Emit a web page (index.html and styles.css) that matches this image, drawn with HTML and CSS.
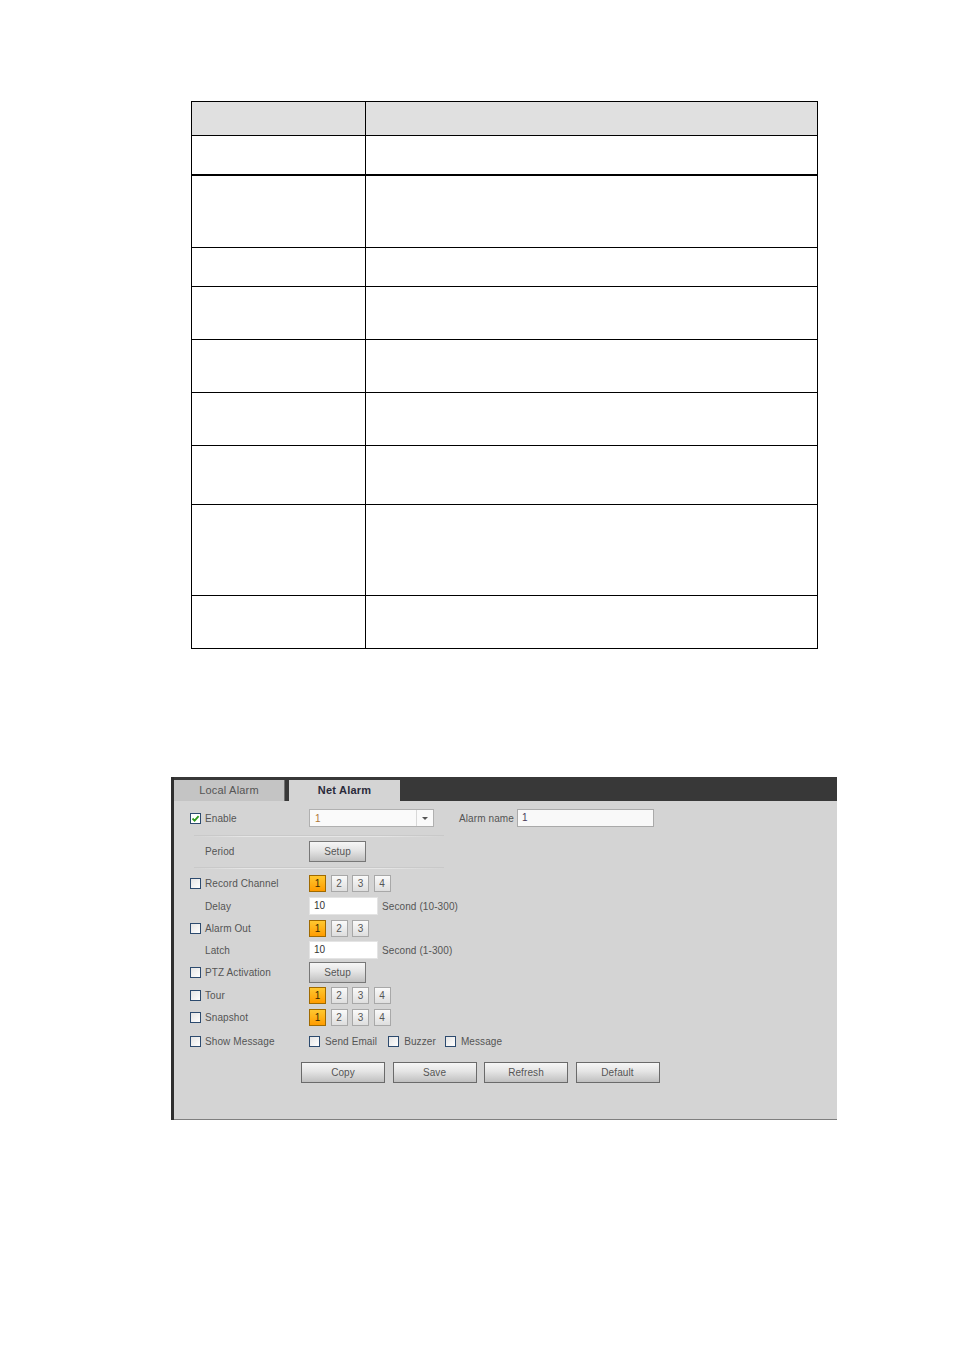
FILE: index.html
```
<!DOCTYPE html>
<html>
<head>
<meta charset="utf-8">
<link rel="stylesheet" href="styles.css">
</head>
<body>
<div class="doc-table">
  <div class="row head h33"><div class="c1"></div><div class="c2"></div></div>
  <div class="row h38"><div class="c1"></div><div class="c2"></div></div>
  <div class="row thick h71"><div class="c1"></div><div class="c2"></div></div>
  <div class="row h38"><div class="c1"></div><div class="c2"></div></div>
  <div class="row h52"><div class="c1"></div><div class="c2"></div></div>
  <div class="row h52"><div class="c1"></div><div class="c2"></div></div>
  <div class="row h52"><div class="c1"></div><div class="c2"></div></div>
  <div class="row h58"><div class="c1"></div><div class="c2"></div></div>
  <div class="row h90"><div class="c1"></div><div class="c2"></div></div>
  <div class="row h52"><div class="c1"></div><div class="c2"></div></div>
</div>

<div class="panel">
  <div class="tabbar">
    <div class="tab">Local Alarm</div>
    <div class="tab active">Net Alarm</div>
  </div>
  <div class="body">
    <div class="frow r22">
      <div class="lab"><span class="cb checked"><svg viewBox="0 0 9 9" width="9" height="9"><path d="M1.5 4.5 L3.6 6.6 L7.6 2.2" fill="none" stroke="#2f9a1e" stroke-width="1.8"/></svg></span>Enable</div>
      <div class="select"><span class="sel-val">1</span><span class="sel-arrow"></span></div>
      <span class="txt name-lab">Alarm name</span>
      <div class="input wide">1</div>
    </div>
    <div class="sep sep1"></div>
    <div class="frow r22 period">
      <div class="lab"><span class="nocb"></span>Period</div>
      <div class="btn setup">Setup</div>
    </div>
    <div class="sep sep2"></div>
    <div class="frow r22 rec">
      <div class="lab"><span class="cb"></span>Record Channel</div>
      <div class="nums"><span class="num on">1</span><span class="num">2</span><span class="num">3</span><span class="num">4</span></div>
    </div>
    <div class="frow r23 delay">
      <div class="lab"><span class="nocb"></span>Delay</div>
      <div class="input short">10</div><span class="txt unit">Second (10-300)</span>
    </div>
    <div class="frow r22">
      <div class="lab"><span class="cb"></span>Alarm Out</div>
      <div class="nums"><span class="num on">1</span><span class="num">2</span><span class="num">3</span></div>
    </div>
    <div class="frow r22">
      <div class="lab"><span class="nocb"></span>Latch</div>
      <div class="input short">10</div><span class="txt unit">Second (1-300)</span>
    </div>
    <div class="frow r23">
      <div class="lab"><span class="cb"></span>PTZ Activation</div>
      <div class="btn setup">Setup</div>
    </div>
    <div class="frow r22">
      <div class="lab"><span class="cb"></span>Tour</div>
      <div class="nums"><span class="num on">1</span><span class="num">2</span><span class="num">3</span><span class="num">4</span></div>
    </div>
    <div class="frow r23">
      <div class="lab"><span class="cb"></span>Snapshot</div>
      <div class="nums"><span class="num on">1</span><span class="num">2</span><span class="num">3</span><span class="num">4</span></div>
    </div>
    <div class="frow r25">
      <div class="lab"><span class="cb"></span>Show Message</div>
      <div class="opts">
        <span class="opt"><span class="cb"></span>Send Email</span>
        <span class="opt"><span class="cb"></span>Buzzer</span>
        <span class="opt"><span class="cb"></span>Message</span>
      </div>
    </div>
    <div class="actions">
      <div class="btn big">Copy</div>
      <div class="btn big">Save</div>
      <div class="btn big">Refresh</div>
      <div class="btn big">Default</div>
    </div>
  </div>
</div>
</body>
</html>
```
FILE: styles.css
```
html, body {
  margin: 0;
  padding: 0;
  background: #ffffff;
}
body {
  font-family: "Liberation Sans", Arial, sans-serif;
}

/* document table */
.doc-table {
  margin: 101px 0 0 191px;
  width: 627px;
  box-sizing: border-box;
  border: 1px solid #000;
}
.row {
  display: flex;
}
.row + .row {
  border-top: 1px solid #000;
}
.row.thick {
  border-top: 2px solid #000;
}
.row .c1 {
  width: 173px;
  border-right: 1px solid #000;
}
.row .c2 {
  flex: 1;
}
.row.head {
  background: #e0e0e0;
}
.h33 { height: 33px; }
.h38 { height: 38px; }
.h52 { height: 52px; }
.h58 { height: 58px; }
.h71 { height: 71px; }
.h90 { height: 90px; }

/* alarm panel */
.panel {
  margin: 128px 0 0 171px;
  width: 666px;
  box-sizing: border-box;
  border-left: 3px solid #2e2e2e;
  font-size: 10px;
  color: #555555;
}
.tabbar {
  height: 24px;
  background: #383838;
  display: flex;
  align-items: flex-end;
  gap: 4px;
}
.tab {
  height: 21px;
  width: 111px;
  line-height: 21px;
  text-align: center;
  background: #c4c4c4;
  color: #555;
  border-right: 1px solid #707070;
  box-sizing: border-box;
  font-size: 11px;
  letter-spacing: 0.2px;
}
.tab.active {
  background: #d4d4d4;
  width: 111px;
  border-right: none;
  font-weight: bold;
  color: #2a2a3a;
  letter-spacing: 0.2px;
}
.body {
  background: #d4d4d4;
  height: 319px;
  border-bottom: 1px solid #7f7f7f;
  padding: 6px 0 0 16px;
  box-sizing: border-box;
}
.frow {
  display: flex;
  align-items: center;
}
.r22 { height: 22px; }
.r23 { height: 23px; }
.r25 { height: 25px; }
.lab {
  width: 119px;
  display: flex;
  align-items: center;
  flex-shrink: 0;
  letter-spacing: 0.1px;
}
.cb {
  width: 11px;
  height: 11px;
  box-sizing: border-box;
  border: 1px solid #2c4a6e;
  background: linear-gradient(135deg, #e4e4e4, #ffffff);
  margin-right: 4px;
  display: inline-flex;
  align-items: center;
  justify-content: center;
  flex-shrink: 0;
}
.cb.checked {
  background: #ffffff;
}
.nocb {
  width: 15px;
  flex-shrink: 0;
}
.select {
  width: 125px;
  height: 18px;
  box-sizing: border-box;
  border: 1px solid #b0b0b0;
  background: #fafafa;
  display: flex;
  align-items: center;
}
.sel-val {
  flex: 1;
  padding-left: 5px;
  color: #b07838;
}
.sel-arrow {
  width: 16px;
  height: 16px;
  border-left: 1px solid #d8d8d8;
  position: relative;
}
.sel-arrow::after {
  content: "";
  position: absolute;
  left: 5px;
  top: 7px;
  border-left: 3px solid transparent;
  border-right: 3px solid transparent;
  border-top: 3px solid #555;
}
.txt {
  letter-spacing: 0.1px;
}
.name-lab {
  margin-left: 25px;
  margin-right: 3px;
}
.input {
  height: 18px;
  box-sizing: border-box;
  border: 1px solid #aaa;
  background: #f9f9f9;
  padding-left: 4px;
  line-height: 16px;
  color: #4a3a5a;
}
.input.wide {
  width: 137px;
}
.input.short {
  width: 69px;
  border-color: #e4e4e4;
  background: #ffffff;
  color: #333;
}
.unit {
  margin-left: 4px;
}
.sep {
  height: 2px;
  width: 250px;
  margin-left: 4px;
  background: linear-gradient(to right, rgba(255,255,255,0), #e6e6e6 20%, #e6e6e6 75%, rgba(255,255,255,0));
  border-top: 1px solid #c9c9c9;
  box-sizing: border-box;
}
.sep1 { margin-top: 6px; }
.sep2 { margin-top: 5px; }
.period { margin-top: 3px; }
.rec { margin-top: 3px; }
.delay { margin-top: 1px; height: 22px; }
.btn {
  box-sizing: border-box;
  border: 1px solid #777;
  background: linear-gradient(to bottom, #f6f6f6 0%, #e4e4e4 45%, #c0c0c0 100%);
  text-align: center;
  color: #555;
  letter-spacing: 0.1px;
}
.btn.setup {
  width: 57px;
  height: 21px;
  line-height: 19px;
}
.nums {
  display: flex;
  gap: 4.5px;
}
.num {
  width: 17px;
  height: 17px;
  box-sizing: border-box;
  border: 1px solid #a8a8a8;
  background: linear-gradient(to bottom, #fafafa, #dedede);
  text-align: center;
  line-height: 15px;
  color: #555;
  font-size: 10px;
}
.num.on {
  border-color: #a06a00;
  background: linear-gradient(to bottom, #ffc830, #ff9c00);
  color: #3a2a00;
}
.opts {
  display: flex;
  align-items: center;
}
.opt {
  display: inline-flex;
  align-items: center;
  letter-spacing: 0.1px;
}
.opt .cb {
  margin-right: 5px;
}
.opt + .opt {
  margin-left: 11px;
}
.opt + .opt + .opt {
  margin-left: 9px;
}
.actions {
  display: flex;
  gap: 7.5px;
  margin: 8px 0 0 111px;
}
.btn.big {
  width: 84px;
  height: 21px;
  line-height: 19px;
  border-color: #6a6a6a;
}
```
